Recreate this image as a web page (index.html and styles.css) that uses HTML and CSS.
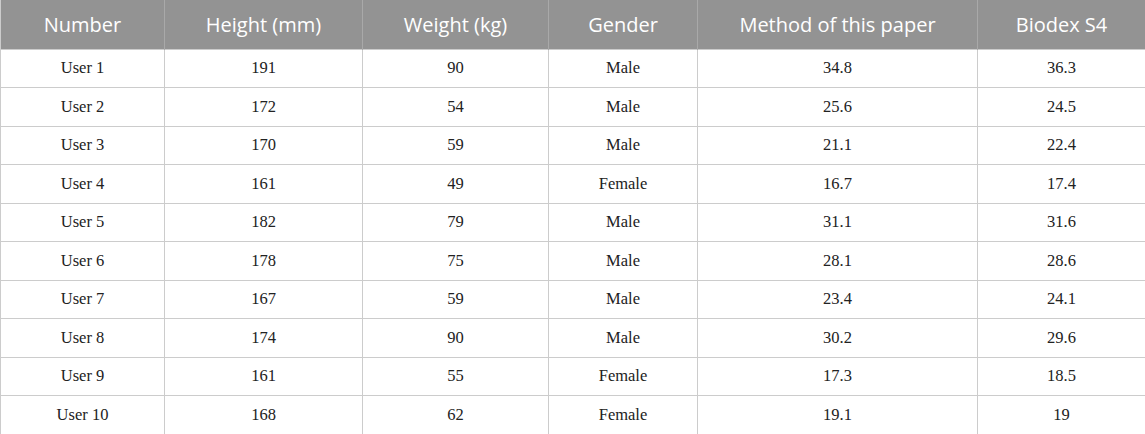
FILE: index.html
```html
<!DOCTYPE html>
<html>
<head>
<meta charset="utf-8">
<link rel="stylesheet" href="styles.css">
</head>
<body>
<table class="data">
  <colgroup>
    <col class="c1"><col class="c2"><col class="c3"><col class="c4"><col class="c5"><col class="c6">
  </colgroup>
  <thead>
    <tr><th>Number</th><th>Height (mm)</th><th>Weight (kg)</th><th>Gender</th><th>Method of this paper</th><th>Biodex S4</th></tr>
  </thead>
  <tbody>
    <tr><td>User 1</td><td>191</td><td>90</td><td>Male</td><td>34.8</td><td>36.3</td></tr>
    <tr><td>User 2</td><td>172</td><td>54</td><td>Male</td><td>25.6</td><td>24.5</td></tr>
    <tr><td>User 3</td><td>170</td><td>59</td><td>Male</td><td>21.1</td><td>22.4</td></tr>
    <tr><td>User 4</td><td>161</td><td>49</td><td>Female</td><td>16.7</td><td>17.4</td></tr>
    <tr><td>User 5</td><td>182</td><td>79</td><td>Male</td><td>31.1</td><td>31.6</td></tr>
    <tr><td>User 6</td><td>178</td><td>75</td><td>Male</td><td>28.1</td><td>28.6</td></tr>
    <tr><td>User 7</td><td>167</td><td>59</td><td>Male</td><td>23.4</td><td>24.1</td></tr>
    <tr><td>User 8</td><td>174</td><td>90</td><td>Male</td><td>30.2</td><td>29.6</td></tr>
    <tr><td>User 9</td><td>161</td><td>55</td><td>Female</td><td>17.3</td><td>18.5</td></tr>
    <tr><td>User 10</td><td>168</td><td>62</td><td>Female</td><td>19.1</td><td>19</td></tr>
  </tbody>
</table>
</body>
</html>
```
FILE: styles.css
```css
html, body {
  margin: 0;
  padding: 0;
  background: #ffffff;
}
.data {
  width: 1145px;
  border-collapse: collapse;
  table-layout: fixed;
}
.c1 { width: 164px; }
.c2 { width: 198px; }
.c3 { width: 186px; }
.c4 { width: 149px; }
.c5 { width: 280px; }
.c6 { width: 168px; }
.data th {
  height: 49px;
  padding: 2px 0 0;
  box-sizing: border-box;
  background: #939393;
  color: #ffffff;
  font-family: "Open Sans", "Noto Sans", sans-serif;
  font-weight: 400;
  font-size: 20px;
  line-height: 1;
  text-align: center;
  vertical-align: middle;
  border-left: 1px solid #a9a9a9;
  border-right: 1px solid #a9a9a9;
  border-top: 0;
}
.data td {
  height: 38.5px;
  padding: 0;
  color: #222222;
  font-family: "Liberation Serif", "Times New Roman", serif;
  font-size: 16.5px;
  line-height: 1;
  text-align: center;
  vertical-align: middle;
  border: 1px solid #cccccc;
  box-sizing: border-box;
}
.data thead th:first-child { border-left-color: #cccccc; }
.data thead th:last-child { border-right-color: #cccccc; }
```
